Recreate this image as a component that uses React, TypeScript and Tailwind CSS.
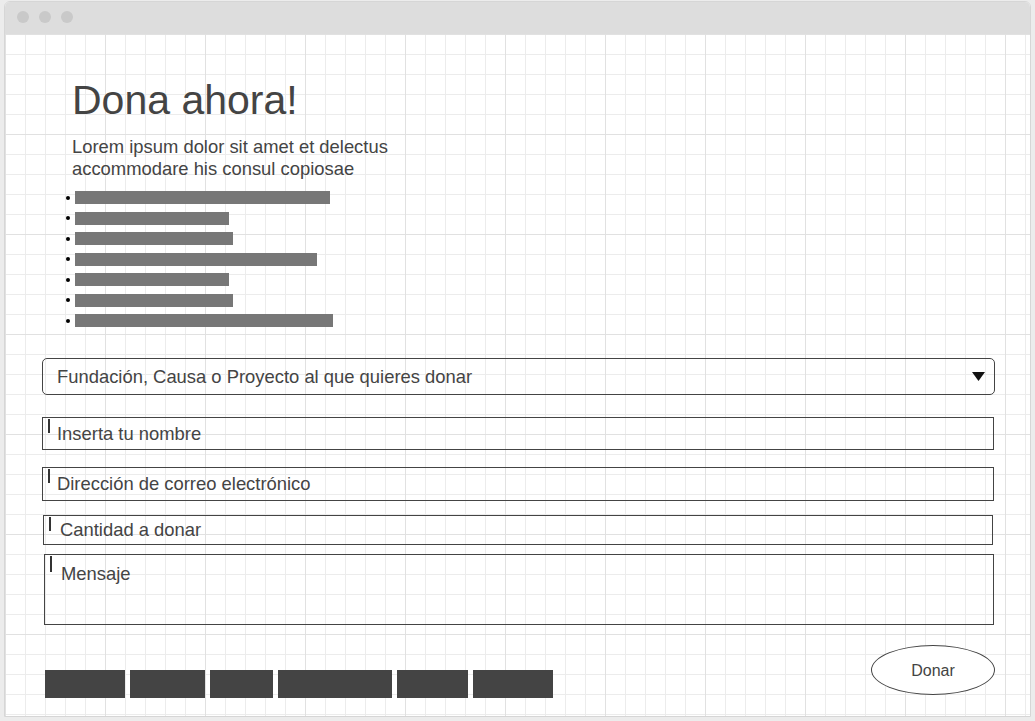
const BARS = [255, 154, 158, 242, 154, 158, 258];
const TABS = [80, 75, 63, 114, 71, 80];

function Caret({ h = 14 }: { h?: number }) {
  return (
    <span
      className={`absolute left-[5px] top-[1px] w-[1.5px] bg-[#333] ${h === 16 ? "h-[16px]" : "h-[14px]"}`}
      aria-hidden
    />
  );
}

export default function App() {
  return (
    <div className="h-[721px] w-[1035px] overflow-hidden bg-[#ececec] pl-[4px] pt-[1px] font-['Liberation_Sans',Arial,sans-serif] text-[#444]">
      <div className="flex h-[716px] w-[1027px] flex-col overflow-hidden rounded-t-[6px] border border-[#d6d6d6] bg-white">
        {/* window chrome */}
        <div className="flex h-[32px] shrink-0 items-start gap-[10px] bg-[#dddddd] pl-[12px] pt-[9px]">
          <span className="h-[12px] w-[12px] rounded-full bg-[#c9c9c9]" />
          <span className="h-[12px] w-[12px] rounded-full bg-[#c9c9c9]" />
          <span className="h-[12px] w-[12px] rounded-full bg-[#c9c9c9]" />
        </div>

        <div className="flex flex-1 flex-col bg-white bg-[linear-gradient(to_right,#e1e1e1_1px,transparent_1px),linear-gradient(to_bottom,#e1e1e1_1px,transparent_1px),linear-gradient(to_right,#ececec_1px,transparent_1px),linear-gradient(to_bottom,#ececec_1px,transparent_1px)] bg-[size:100px_100px,100px_100px,20px_20px,20px_20px]">
          <h1 className="ml-[67px] mt-[46px] text-[41px] font-normal leading-[41px]">Dona ahora!</h1>
          <p className="ml-[67px] mt-[15px] w-[340px] text-[18.4px] leading-[22px]">
            Lorem ipsum dolor sit amet et delectus accommodare his consul copiosae
          </p>

          <ul className="ml-[61px] mt-[11px] flex flex-col gap-[7.5px]">
            {BARS.map((w, i) => (
              <li key={i} className="flex h-[13px] items-center gap-[5px]">
                <span className="h-[4px] w-[4px] rounded-full bg-black" />
                <span className="h-[13px] bg-[#777]" style={{ width: w }} />
              </li>
            ))}
          </ul>

          <div className="ml-[37px] mt-[31px] flex h-[37px] w-[953px] items-center justify-between rounded-[5px] border border-[#444] pl-[14px] pr-[9px] text-[18.4px]">
            <span>Fundación, Causa o Proyecto al que quieres donar</span>
            <svg width="13" height="9" viewBox="0 0 13 9" aria-hidden>
              <polygon points="0,0 13,0 6.5,9" fill="#111" />
            </svg>
          </div>

          <div className="relative ml-[37px] mt-[22px] flex h-[33px] w-[952px] items-center border border-[#444] pl-[14px] text-[18.4px]">
            <Caret />
            Inserta tu nombre
          </div>

          <div className="relative ml-[37px] mt-[17px] flex h-[34px] w-[952px] items-center border border-[#444] pl-[14px] text-[18.4px]">
            <Caret />
            Dirección de correo electrónico
          </div>

          <div className="relative ml-[38px] mt-[14px] flex h-[30px] w-[950px] items-center border border-[#444] pl-[16px] text-[18.4px]">
            <Caret />
            Cantidad a donar
          </div>

          <div className="relative ml-[39px] mt-[9px] h-[71px] w-[950px] border border-[#444] pl-[16px] pt-[8px] text-[18.4px] leading-[22px]">
            <Caret h={16} />
            Mensaje
          </div>

          <div className="ml-[40px] mt-[20px] flex w-[950px] items-start justify-between">
            <div className="mt-[25px] flex gap-[5px]">
              {TABS.map((w, i) => (
                <span key={i} className="h-[28px] bg-[#444]" style={{ width: w }} />
              ))}
            </div>
            <button
              type="button"
              className="flex h-[50px] w-[124px] items-center justify-center rounded-[50%] border border-[#444] bg-white pt-[1px] text-[16px] text-[#444]"
            >
              Donar
            </button>
          </div>
        </div>
      </div>
    </div>
  );
}
